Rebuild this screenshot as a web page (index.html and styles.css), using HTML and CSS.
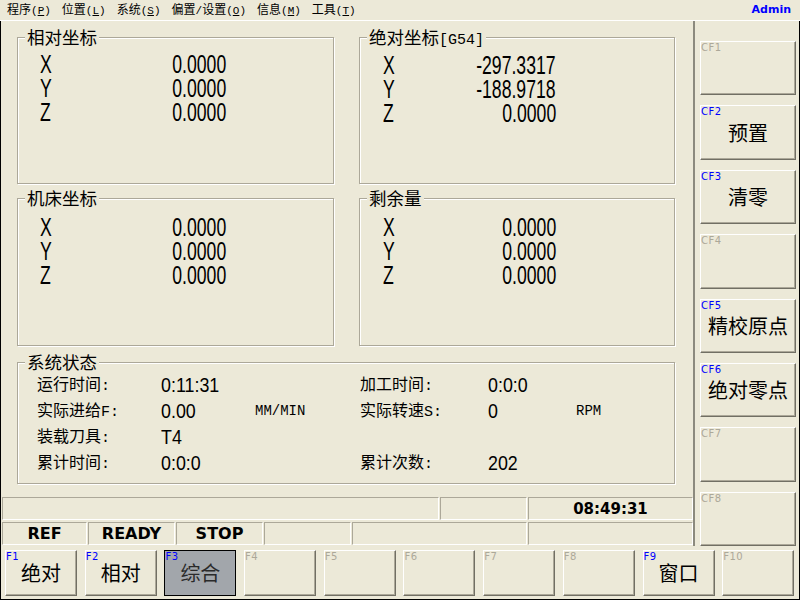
FILE: index.html
```html
<!DOCTYPE html>
<html lang="zh">
<head>
<meta charset="utf-8">
<title>CNC</title>
<link rel="stylesheet" href="styles.css">
</head>
<body>
<div class="menubar">
  <span class="menu-item">程序<span class="acc">(<u>P</u>)</span></span>
  <span class="menu-item">位置<span class="acc">(<u>L</u>)</span></span>
  <span class="menu-item">系统<span class="acc">(<u>S</u>)</span></span>
  <span class="menu-item">偏置<span class="acc">/</span>设置<span class="acc">(<u>O</u>)</span></span>
  <span class="menu-item">信息<span class="acc">(<u>M</u>)</span></span>
  <span class="menu-item">工具<span class="acc">(<u>T</u>)</span></span>
  <span class="admin">Admin</span>
</div>
<div class="screen">
  <div class="upper">
    <div class="leftcol">
      <div class="panel">
        <div class="group top">
          <div class="gtitle">相对坐标</div>
          <div class="coords wide">
            <span class="ax"><span class="n">X</span></span><span class="val"><span class="n">0.0000</span></span>
            <span class="ax"><span class="n">Y</span></span><span class="val"><span class="n">0.0000</span></span>
            <span class="ax"><span class="n">Z</span></span><span class="val"><span class="n">0.0000</span></span>
          </div>
        </div>
        <div class="group top abs">
          <div class="gtitle">绝对坐标<span class="mono">[G54]</span></div>
          <div class="coords narrow">
            <span class="ax"><span class="n">X</span></span><span class="val"><span class="n">-297.3317</span></span>
            <span class="ax"><span class="n">Y</span></span><span class="val"><span class="n">-188.9718</span></span>
            <span class="ax"><span class="n">Z</span></span><span class="val"><span class="n">0.0000</span></span>
          </div>
        </div>
        <div class="group">
          <div class="gtitle">机床坐标</div>
          <div class="coords wide">
            <span class="ax"><span class="n">X</span></span><span class="val"><span class="n">0.0000</span></span>
            <span class="ax"><span class="n">Y</span></span><span class="val"><span class="n">0.0000</span></span>
            <span class="ax"><span class="n">Z</span></span><span class="val"><span class="n">0.0000</span></span>
          </div>
        </div>
        <div class="group">
          <div class="gtitle">剩余量</div>
          <div class="coords narrow">
            <span class="ax"><span class="n">X</span></span><span class="val"><span class="n">0.0000</span></span>
            <span class="ax"><span class="n">Y</span></span><span class="val"><span class="n">0.0000</span></span>
            <span class="ax"><span class="n">Z</span></span><span class="val"><span class="n">0.0000</span></span>
          </div>
        </div>
        <div class="group sys">
          <div class="gtitle">系统状态</div>
          <div class="sysgrid">
            <span class="lbl">运行时间<span class="mono2">:</span></span><span class="sv"><span class="n">0:11:31</span></span><span></span>
            <span class="lbl">加工时间<span class="mono2">:</span></span><span class="sv"><span class="n">0:0:0</span></span><span></span>
            <span class="lbl">实际进给<span class="mono2">F:</span></span><span class="sv"><span class="n">0.00</span></span><span class="unit">MM/MIN</span>
            <span class="lbl">实际转速<span class="mono2">S:</span></span><span class="sv"><span class="n">0</span></span><span class="unit">RPM</span>
            <span class="lbl">装载刀具<span class="mono2">:</span></span><span class="sv"><span class="n">T4</span></span><span></span>
            <span></span><span></span><span></span>
            <span class="lbl">累计时间<span class="mono2">:</span></span><span class="sv"><span class="n">0:0:0</span></span><span></span>
            <span class="lbl">累计次数<span class="mono2">:</span></span><span class="sv"><span class="n">202</span></span><span></span>
          </div>
        </div>
      </div>
      <div class="status">
        <div class="srow">
          <div class="cell w437"></div>
          <div class="cell w87"></div>
          <div class="cell w165 clock">08:49:31</div>
        </div>
        <div class="srow">
          <div class="cell w85">REF</div>
          <div class="cell w87">READY</div>
          <div class="cell w87">STOP</div>
          <div class="cell w87"></div>
          <div class="cell w175"></div>
          <div class="cell w165"></div>
        </div>
      </div>
    </div>
    <div class="rightcol">
      <div class="btn cf"><span class="key off">CF1</span></div>
      <div class="btn cf"><span class="key">CF2</span>预置</div>
      <div class="btn cf"><span class="key">CF3</span>清零</div>
      <div class="btn cf"><span class="key off">CF4</span></div>
      <div class="btn cf"><span class="key">CF5</span>精校原点</div>
      <div class="btn cf"><span class="key">CF6</span>绝对零点</div>
      <div class="btn cf"><span class="key off">CF7</span></div>
      <div class="btn cf"><span class="key off">CF8</span></div>
    </div>
  </div>
  <div class="fbar">
    <div class="btn fk"><span class="key">F1</span>绝对</div>
    <div class="btn fk"><span class="key">F2</span>相对</div>
    <div class="btn fk active"><span class="key">F3</span>综合</div>
    <div class="btn fk"><span class="key off">F4</span></div>
    <div class="btn fk"><span class="key off">F5</span></div>
    <div class="btn fk"><span class="key off">F6</span></div>
    <div class="btn fk"><span class="key off">F7</span></div>
    <div class="btn fk"><span class="key off">F8</span></div>
    <div class="btn fk"><span class="key">F9</span>窗口</div>
    <div class="btn fk"><span class="key off">F10</span></div>
  </div>
</div>
</body>
</html>
```
FILE: styles.css
```css
* { box-sizing: border-box; }
html, body { margin: 0; padding: 0; }
body {
  width: 800px;
  height: 600px;
  overflow: hidden;
  background: #ECE9D8;
  color: #000;
  font-family: "Noto Sans CJK SC", sans-serif;
}

/* menu bar */
.menubar {
  height: 21px;
  display: flex;
  align-items: center;
  gap: 11px;
  padding: 0 9px 0 7px;
  border-bottom: 1px solid #fff;
  font-size: 12px;
  line-height: 20px;
}
.menu-item { white-space: nowrap; }
.acc { font-family: "Liberation Mono", monospace; font-size: 11px; }
.admin {
  margin-left: auto;
  color: #0000FF;
  font-family: "DejaVu Sans", sans-serif;
  font-weight: bold;
  font-size: 11px;
}

/* main screen */
.screen {
  height: 579px;
  border: 1px solid #000;
  border-top: 0;
  display: flex;
  flex-direction: column;
}
.upper { height: 525px; display: flex; }
.leftcol {
  width: 694px;
  display: flex;
  flex-direction: column;
  border-right: 2px solid #8C8A7E;
}
.panel {
  height: 474px;
  padding: 16px 0 0 16px;
  display: grid;
  grid-template-columns: 317px 316px;
  grid-template-rows: 147px 148px 124px;
  column-gap: 25px;
  row-gap: 14px;
  align-content: start;
}

/* group boxes */
.group {
  border: 1px solid #ACA899;
  box-shadow: 1px 1px 0 #fff, inset 1px 1px 0 #fff;
}
.group.sys { grid-column: 1 / 3; margin-top: 2px; }
.gtitle {
  width: fit-content;
  height: 20px;
  margin: -11.5px 0 0 7px;
  padding: 0 2px;
  background: #ECE9D8;
  font-size: 17.5px;
  line-height: 20px;
  white-space: nowrap;
}
.mono { font-family: "Liberation Mono", monospace; font-size: 15px; line-height: 1; }

.coords {
  display: grid;
  margin: 7px 0 0 22px;
  font-family: "Liberation Sans", sans-serif;
  font-size: 21px;
  line-height: 24px;
}
.group.top .coords { margin-top: 5px; }
.group.top.abs .coords { margin-top: 6px; }
.coords.wide { grid-template-columns: 30px 156px; }
.coords.narrow { grid-template-columns: 30px 143px; margin-left: 23px; }
.coords .n { display: inline-block; transform: scale(0.84, 1.24); }
.coords .ax .n { transform-origin: left center; }
.coords .val { text-align: right; }
.coords .val .n { transform-origin: right center; }

/* system status */
.sysgrid {
  display: grid;
  grid-template-columns: 124px 94px 105px 128px 88px 1fr;
  grid-auto-rows: 26px;
  align-items: center;
  padding-left: 19px;
  margin-top: 0.5px;
}
.lbl { font-size: 16px; line-height: 26px; white-space: nowrap; }
.mono2 { font-family: "Liberation Mono", monospace; font-size: 15px; }
.sv { font-family: "Liberation Sans", sans-serif; font-size: 21px; line-height: 26px; }
.sv .n { display: inline-block; transform: scaleX(0.85); transform-origin: left center; }
.unit { font-family: "Liberation Mono", monospace; font-size: 14px; line-height: 26px; }

/* status bars */
.status {
  display: flex;
  flex-direction: column;
  gap: 2px;
  padding: 2px 0 0 1px;
}
.srow { display: flex; gap: 1px; height: 23px; }
.cell {
  border: 1px solid;
  border-color: #ACA899 #fff #fff #ACA899;
  display: flex;
  align-items: center;
  justify-content: center;
  font-family: "DejaVu Sans", sans-serif;
  font-weight: bold;
  font-size: 16px;
}
.cell.clock { font-size: 15px; }
.w437 { width: 437px; }
.w85 { width: 85px; }
.w87 { width: 87px; }
.w165 { width: 165px; }
.w175 { width: 175px; }

/* buttons */
.btn {
  position: relative;
  background: #ECE9D8;
  border: 1px solid;
  border-color: #fff #716F64 #716F64 #fff;
  box-shadow: inset -1px -1px 0 #ACA899;
  display: flex;
  align-items: center;
  justify-content: center;
  font-size: 20px;
  line-height: 1;
}
.key {
  position: absolute;
  top: 1px;
  left: 0;
  font-family: "DejaVu Sans", sans-serif;
  font-size: 10px;
  line-height: 10px;
  letter-spacing: 0.5px;
  color: #0000FF;
}
.key.off { color: #ACA899; }

.rightcol {
  flex: 1;
  display: flex;
  flex-direction: column;
  gap: 10px;
  padding: 20px 0 0 5px;
}
.cf { width: 96px; height: 54.5px; }

.fbar {
  height: 53px;
  display: flex;
  gap: 7.7px;
  padding: 4px 0 0 4px;
}
.fk { width: 72px; height: 46px; }
.fk.active {
  background: #A2A6AB;
  border-color: #000;
  box-shadow: none;
  color: #2A2A2A;
}
```
